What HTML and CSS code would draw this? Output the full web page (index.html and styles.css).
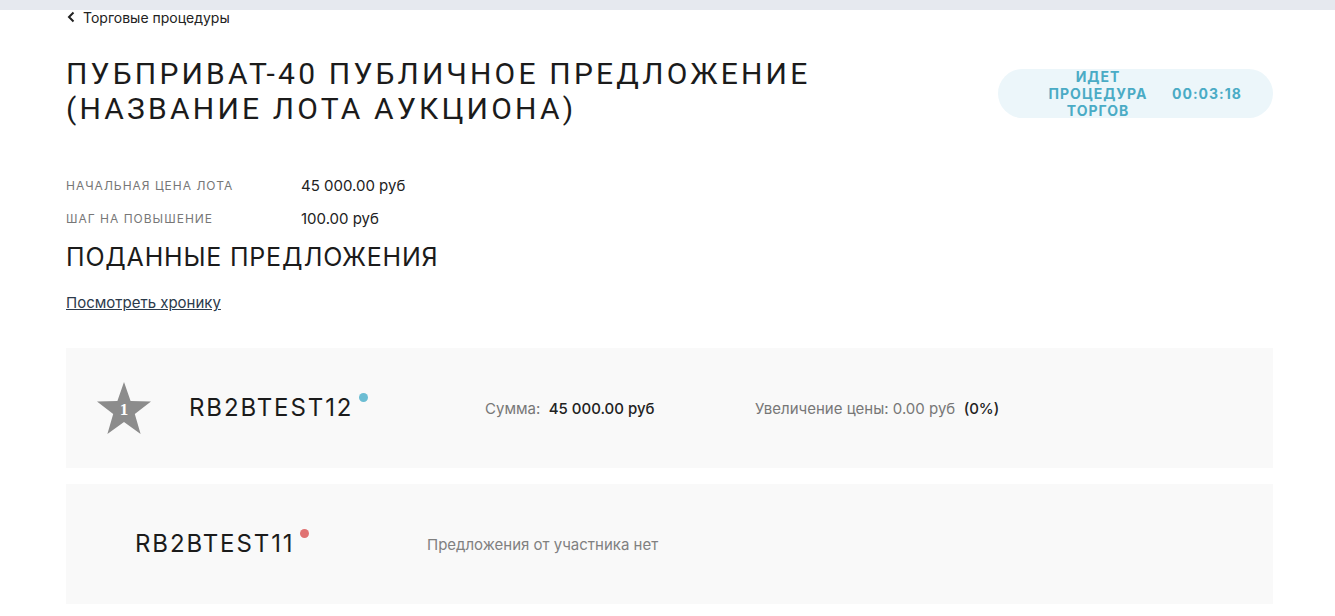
FILE: index.html
```html
<!DOCTYPE html>
<html lang="ru">
<head>
<meta charset="utf-8">
<link rel="stylesheet" href="styles.css">
</head>
<body>
<div class="topbar"></div>
<main class="page">
  <a class="back" href="#"><svg width="8" height="12" viewBox="0 0 8 12"><path d="M6.5 1.5 L2 6 L6.5 10.5" fill="none" stroke="#222" stroke-width="2"/></svg><span>Торговые процедуры</span></a>
  <div class="head">
    <h1 class="title">ПУБПРИВАТ-40 ПУБЛИЧНОЕ ПРЕДЛОЖЕНИЕ<br>(НАЗВАНИЕ ЛОТА АУКЦИОНА)</h1>
    <div class="badge"><span class="status">ИДЕТ<br>ПРОЦЕДУРА<br>ТОРГОВ</span><span class="time">00:03:18</span></div>
  </div>
  <dl class="info">
    <div class="info-row"><dt>НАЧАЛЬНАЯ ЦЕНА ЛОТА</dt><dd>45 000.00 руб</dd></div>
    <div class="info-row"><dt>ШАГ НА ПОВЫШЕНИЕ</dt><dd>100.00 руб</dd></div>
  </dl>
  <h2 class="section">ПОДАННЫЕ ПРЕДЛОЖЕНИЯ</h2>
  <a class="chronicle" href="#">Посмотреть хронику</a>
  <div class="bids">
    <div class="bid">
      <div class="star"><svg width="56" height="54" viewBox="0 0 56 54"><polygon points="28,1 34.6,20 55,20.5 38.8,33 44.6,53 28,41 11.4,53 17.2,33 1,20.5 21.4,20" fill="#8c8c8c"/></svg><span class="place">1</span></div>
      <div class="name-cell first"><span class="name">RB2BTEST12<i class="dot blue"></i></span></div>
      <div class="sum"><span class="lbl">Сумма:</span>&nbsp; <b>45 000.00 руб</b></div>
      <div class="inc"><span class="lbl">Увеличение цены: 0.00 руб</span>&nbsp; <b>(0%)</b></div>
    </div>
    <div class="bid">
      <div class="name-cell second"><span class="name">RB2BTEST11<i class="dot red"></i></span></div>
      <div class="none">Предложения от участника нет</div>
    </div>
  </div>
</main>
</body>
</html>
```
FILE: styles.css
```css
* { box-sizing: border-box; }
html, body { margin: 0; padding: 0; background: #fff; }
body { font-family: Inter, "Noto Sans", sans-serif; color: #222; }
.topbar { height: 10px; background: #e6e9ef; }
.page { width: 1207px; margin-left: 66px; }
.back { display: flex; align-items: center; gap: 8px; text-decoration: none; color: #222; font-size: 14px; height: 16px; margin-top: -1px; }
.back svg { margin-left: 1px; }
.head { display: flex; justify-content: space-between; align-items: flex-start; margin-top: 31px; }
.title { margin: 0; font-family: Roboto, sans-serif; font-weight: 400; font-size: 30px; line-height: 35px; letter-spacing: 3.2px; color: #1b1b1b; }
.badge { width: 275px; height: 49px; margin-top: 13px; border-radius: 25px; background: #ecf6fa; display: flex; align-items: center; color: #4aabc5; font-weight: 700; font-size: 14px; letter-spacing: 1px; }
.status { width: 200px; text-align: center; line-height: 17px; }
.time { margin-left: -26px; }
.info { margin: 43px 0 0; }
.info-row { display: flex; align-items: center; height: 33px; }
.info-row dt { width: 235px; font-size: 12px; letter-spacing: 1px; color: #777; }
.info-row dd { margin: 0; font-size: 15px; color: #222; }
.section { margin: 7px 0 0; font-weight: 400; font-size: 25px; letter-spacing: 0.8px; line-height: 30px; color: #1b1b1b; }
.chronicle { display: inline-block; margin-top: 21px; font-size: 15px; color: #2c3a4b; text-decoration: underline; }
.bids { margin-top: 36px; display: flex; flex-direction: column; gap: 16px; }
.bid { height: 120px; background: #f9f9f9; display: flex; align-items: center; }
.star { position: relative; width: 56px; height: 54px; margin-left: 30px; }
.star svg { display: block; }
.place { position: absolute; left: 0; right: 0; top: 19px; text-align: center; font-family: "Liberation Serif", serif; font-weight: 700; font-size: 17px; color: #fff; }
.name-cell { flex: none; }
.first { margin-left: 37px; width: 296px; }
.second { margin-left: 69px; width: 292px; }
.name { position: relative; display: inline-block; font-size: 24px; line-height: 30px; letter-spacing: 1.9px; color: #1b1b1b; }
.dot { position: absolute; left: calc(100% + 6px); top: 0; width: 9px; height: 9px; border-radius: 50%; }
.blue { background: #6cbdd3; }
.red { background: #e07272; }
.lbl { color: #777; }
.sum { font-size: 15px; width: 270px; }
.sum b, .inc b { font-weight: 500; color: #222; }
.inc { font-size: 15px; }
.none { font-size: 15px; color: #808080; }
```
